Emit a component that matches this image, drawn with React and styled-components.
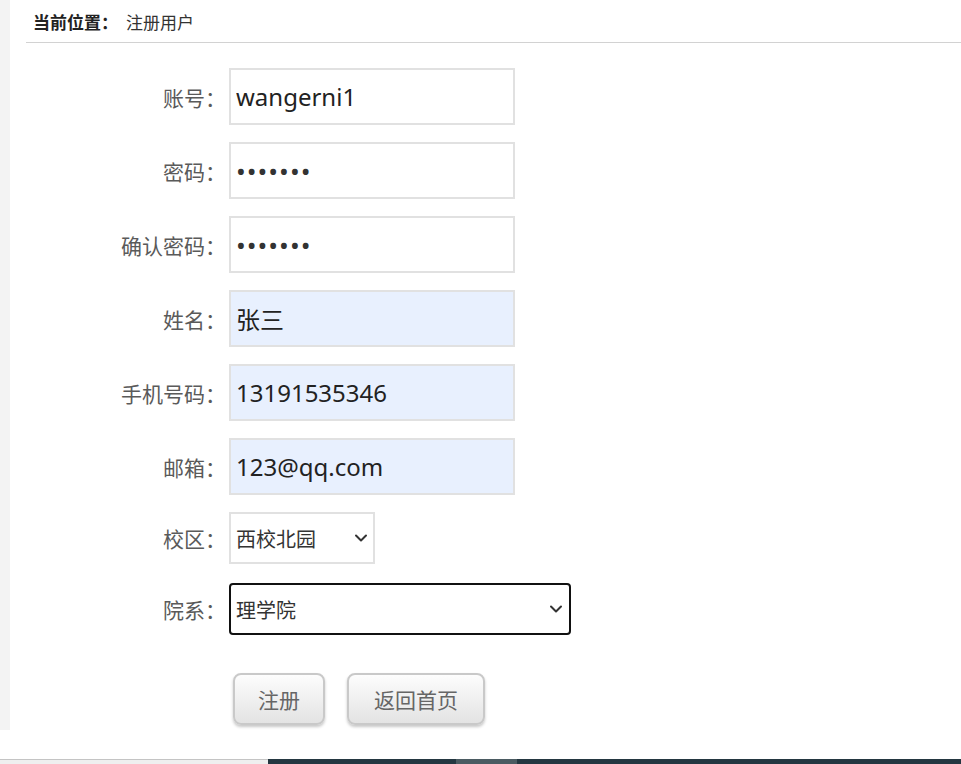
import React from 'react';
import styled, { createGlobalStyle } from 'styled-components';

const GlobalStyle = createGlobalStyle`
  html, body {
    margin: 0;
    padding: 0;
    background: #fff;
  }

  body {
    font-family: "Noto Sans", "Noto Sans CJK SC", sans-serif;
    height: 764px;
    overflow: hidden;
  }
`;

const Page = styled.div`
  display: flex;
  flex-direction: column;
  height: 764px;
`;

const Body = styled.div`
  display: flex;
  height: 730px;
`;

const SideStrip = styled.div`
  background: #f3f3f3;
  flex: 0 0 10px;
`;

const Main = styled.section`
  flex: 1;
  margin-left: 16px;
`;

const Crumb = styled.div`
  align-items: center;
  border-bottom: 1px solid #d2d2d2;
  color: #333;
  display: flex;
  font-family: "Noto Sans CJK SC", sans-serif;
  font-size: 17px;
  height: 42px;
  padding-left: 7px;

  strong {
    color: #222;
    font-weight: 700;
    margin-right: 8px;
  }
`;

const Form = styled.form`
  display: flex;
  flex-direction: column;
  gap: 17px;
  padding-top: 25px;
`;

const Row = styled.div`
  align-items: center;
  display: flex;
  margin-top: ${props => props.$mt || 0}px;
`;

const Label = styled.label`
  color: #5a5a5a;
  flex: 0 0 200px;
  font-family: "Noto Sans CJK SC", sans-serif;
  font-size: 21px;
  text-align: right;
`;

const Field = styled.input`
  background: ${props => (props.$filled ? '#e8f0fe' : '#fff')};
  border: 2px solid #e1e1e1;
  box-sizing: border-box;
  color: #222;
  font-family: "Noto Sans", "Noto Sans CJK SC", sans-serif;
  font-size: 24px;
  height: 57px;
  margin-left: 3px;
  outline: none;
  padding: 0 5px;
  width: 286px;

  &[type='password'] {
    color: #333;
    font-size: 26px;
    letter-spacing: 1px;
  }
`;

const SelectWrap = styled.div`
  margin-left: 3px;
  position: relative;
  width: ${props => props.$w}px;

  svg {
    pointer-events: none;
    position: absolute;
    right: ${props => props.$arrow}px;
    top: 50%;
    transform: translateY(-50%);
  }
`;

const Select = styled.select`
  appearance: none;
  background: #fff;
  border: 2px solid ${props => (props.$focus ? '#111' : '#e1e1e1')};
  border-radius: ${props => (props.$focus ? 4 : 0)}px;
  box-sizing: border-box;
  color: #333;
  font-family: "Noto Sans CJK SC", sans-serif;
  font-size: 20px;
  height: ${props => props.$h}px;
  outline: none;
  padding: 0 5px;
  width: 100%;
`;

const Buttons = styled.div`
  display: flex;
  gap: 22px;
  margin-left: 207px;
  margin-top: 38px;
`;

const Button = styled.button`
  background: linear-gradient(#fdfdfd, #e3e3e3);
  border: 2px solid #c9c9c9;
  border-radius: 8px;
  box-shadow: 0 2px 3px rgba(0, 0, 0, 0.22);
  color: #666;
  font-family: "Noto Sans CJK SC", sans-serif;
  font-size: 21px;
  height: 52px;
  padding: 0 ${props => props.$pad}px;
`;

const Taskbar = styled.div`
  display: flex;
  height: 5px;
  margin-top: auto;
`;

const TaskSeg = styled.div`
  background: ${props => props.$bg};
  border-top: ${props => (props.$light ? '1px solid #c4c4c4' : 'none')};
  box-sizing: border-box;
  flex: ${props => (props.$w ? `0 0 ${props.$w}px` : 1)};
`;

const Chevron = () => (
  <svg width="14" height="9" viewBox="0 0 14 9">
    <path d="M2 2 L7 7 L12 2" fill="none" stroke="#333" strokeWidth="2" strokeLinecap="round" strokeLinejoin="round" />
  </svg>
);

const App = () => (
  <Page>
    <GlobalStyle />
    <Body>
      <SideStrip />
      <Main>
        <Crumb>
          <strong>当前位置：</strong>
          注册用户
        </Crumb>
        <Form onSubmit={e => e.preventDefault()}>
          <Row>
            <Label>账号：</Label>
            <Field type="text" defaultValue="wangerni1" />
          </Row>
          <Row>
            <Label>密码：</Label>
            <Field type="password" defaultValue="1234567" />
          </Row>
          <Row>
            <Label>确认密码：</Label>
            <Field type="password" defaultValue="1234567" />
          </Row>
          <Row>
            <Label>姓名：</Label>
            <Field $filled type="text" defaultValue="张三" />
          </Row>
          <Row>
            <Label>手机号码：</Label>
            <Field $filled type="text" defaultValue="13191535346" />
          </Row>
          <Row>
            <Label>邮箱：</Label>
            <Field $filled type="text" defaultValue="123@qq.com" />
          </Row>
          <Row>
            <Label>校区：</Label>
            <SelectWrap $w={146} $arrow={7}>
              <Select $h={52} defaultValue="xb">
                <option value="xb">西校北园</option>
              </Select>
              <Chevron />
            </SelectWrap>
          </Row>
          <Row $mt={2}>
            <Label>院系：</Label>
            <SelectWrap $w={342} $arrow={8}>
              <Select $focus $h={52} defaultValue="lx">
                <option value="lx">理学院</option>
              </Select>
              <Chevron />
            </SelectWrap>
          </Row>
        </Form>
        <Buttons>
          <Button $pad={23}>注册</Button>
          <Button $pad={25}>返回首页</Button>
        </Buttons>
      </Main>
    </Body>
    <Taskbar>
      <TaskSeg $light $bg="#efefef" $w={268} />
      <TaskSeg $bg="#243741" $w={188} />
      <TaskSeg $bg="#4b5b62" $w={61} />
      <TaskSeg $bg="#243741" />
    </Taskbar>
  </Page>
);

export default App;
